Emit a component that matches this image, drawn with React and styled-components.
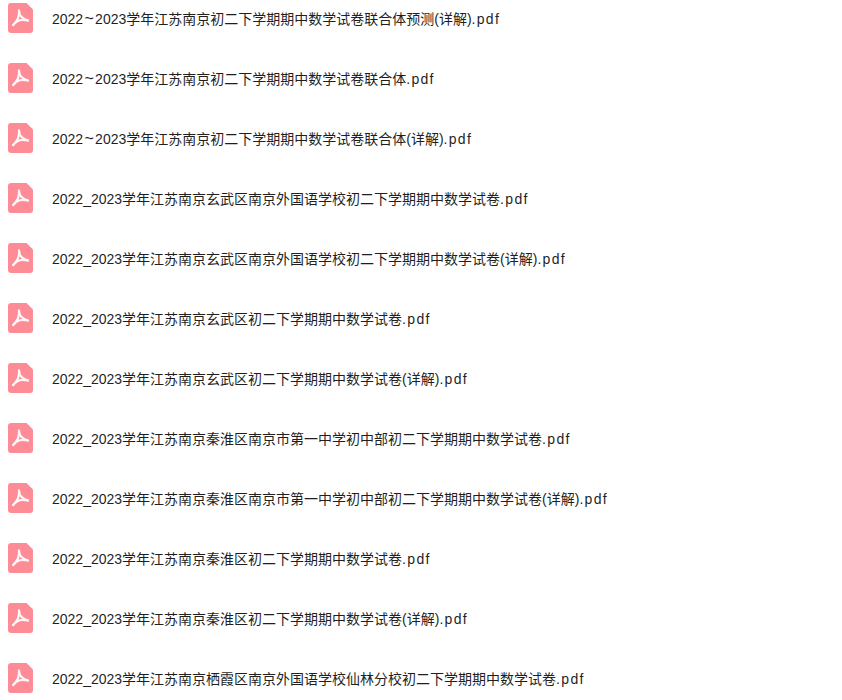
import React from "react";
import styled, { createGlobalStyle } from "styled-components";

const GlobalStyle = createGlobalStyle`
  html, body {
    margin: 0;
    padding: 0;
    background: #fff;
  }
  body {
    height: 700px;
    overflow: hidden;
  }
`;

const FileList = styled.ul`
  list-style: none;
  margin: 0;
  padding: 3px 0 0 8px;
  font-family: "Liberation Sans", "Noto Sans CJK SC", sans-serif;
  font-size: 14px;
  color: #1f1f1f;
`;

const FileRow = styled.li`
  display: flex;
  align-items: center;
  gap: 19px;
  height: 30px;
  margin-bottom: 30px;
`;

const FileName = styled.span`
  white-space: nowrap;
  line-height: 30px;
  padding-top: 2px;
`;

const Tilde = styled.span`
  margin: 0 1.3px;
  font-size: 16px;
  line-height: 1;
`;

const Extension = styled.span`
  letter-spacing: 1.3px;
`;

const PdfIcon = () => (
  <svg width="25" height="30" viewBox="0 0 25 30" style={{ flex: "none" }}>
    <path
      d="M3 0H18.5L25 6.5V27a3 3 0 0 1-3 3H3a3 3 0 0 1-3-3V3a3 3 0 0 1 3-3Z"
      fill="#fe8c97"
    />
    <g fill="none" stroke="#fff" strokeWidth="2.2" strokeLinecap="round" opacity="0.92">
      <path d="M11 7.5C11 11 13 15.5 20 17.5" />
      <path d="M11 7.5C11.5 12 9.5 18 5.2 22" />
      <path d="M5.2 22C8 17.5 14 16 20 17.5" />
    </g>
  </svg>
);

const files = [
  ["2022", "~", "2023学年江苏南京初二下学期期中数学试卷联合体预测(详解)"],
  ["2022", "~", "2023学年江苏南京初二下学期期中数学试卷联合体"],
  ["2022", "~", "2023学年江苏南京初二下学期期中数学试卷联合体(详解)"],
  ["2022", "_", "2023学年江苏南京玄武区南京外国语学校初二下学期期中数学试卷"],
  ["2022", "_", "2023学年江苏南京玄武区南京外国语学校初二下学期期中数学试卷(详解)"],
  ["2022", "_", "2023学年江苏南京玄武区初二下学期期中数学试卷"],
  ["2022", "_", "2023学年江苏南京玄武区初二下学期期中数学试卷(详解)"],
  ["2022", "_", "2023学年江苏南京秦淮区南京市第一中学初中部初二下学期期中数学试卷"],
  ["2022", "_", "2023学年江苏南京秦淮区南京市第一中学初中部初二下学期期中数学试卷(详解)"],
  ["2022", "_", "2023学年江苏南京秦淮区初二下学期期中数学试卷"],
  ["2022", "_", "2023学年江苏南京秦淮区初二下学期期中数学试卷(详解)"],
  ["2022", "_", "2023学年江苏南京栖霞区南京外国语学校仙林分校初二下学期期中数学试卷"],
];

export default function App() {
  return (
    <>
      <GlobalStyle />
      <FileList>
        {files.map(([from, sep, rest]) => (
          <FileRow key={from + sep + rest}>
            <PdfIcon />
            <FileName>
              {from}
              {sep === "~" ? <Tilde>~</Tilde> : sep}
              {rest}
              <Extension>.pdf</Extension>
            </FileName>
          </FileRow>
        ))}
      </FileList>
    </>
  );
}
